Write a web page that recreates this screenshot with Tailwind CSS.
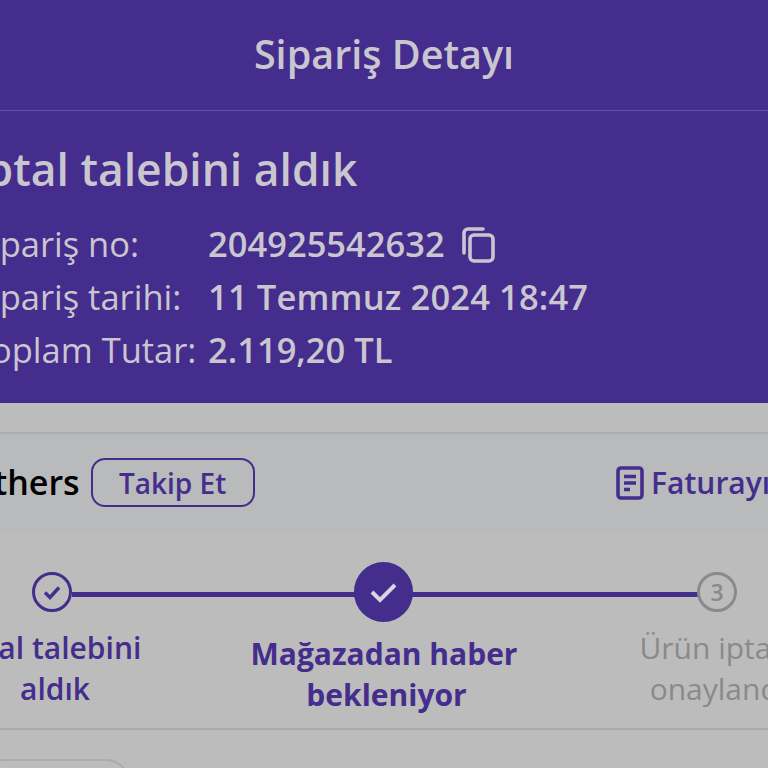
<!DOCTYPE html>
<html lang="tr"><head><meta charset="utf-8"><script src="https://cdn.jsdelivr.net/npm/@tailwindcss/browser@4"></script></head>
<body class="m-0">
<div class="w-[768px] h-[768px] overflow-hidden bg-[#bcbcbc] font-['Open_Sans','Noto_Sans',sans-serif]">
  <section class="h-[403px] bg-[#442d8c] text-[#cac6d0]">
    <header class="h-[111px] border-b border-[#6553a0] flex items-center justify-center text-[39.5px] font-semibold">Sipariş Detayı</header>
    <div class="-ml-[28px]">
      <h1 class="mt-[30px] h-[56px] leading-[56px] text-[44.4px] font-semibold whitespace-nowrap">İptal talebini aldık</h1>
      <div class="mt-[20px] grid grid-cols-[236px_auto] justify-start text-[34.5px] leading-[53px] whitespace-nowrap">
        <span>Sipariş no:</span>
        <span class="flex items-center font-semibold">204925542632
          <svg class="ml-[16px] mt-[3px]" width="36" height="36" viewBox="0 0 36 36" fill="none" stroke="#cac6d0" stroke-width="3.6" stroke-linecap="round" stroke-linejoin="round"><rect x="9" y="8" width="23" height="26" rx="4"/><path d="M3 26V6a4 4 0 0 1 4-4h15"/></svg>
        </span>
        <span>Sipariş tarihi:</span>
        <span class="font-semibold tracking-[0.15px]">11 Temmuz 2024 18:47</span>
        <span>Toplam Tutar:</span>
        <span class="font-semibold">2.119,20 TL</span>
      </div>
    </div>
  </section>
  <div class="h-[31px] border-b-2 border-[#acacac]"></div>
  <div class="h-[99px] pb-[2px] bg-[#b9babc] flex items-center justify-between">
    <div class="flex items-center -ml-[33px]">
      <span class="text-[34px] font-semibold text-black whitespace-nowrap">Others</span>
      <span class="ml-[11px] w-[164px] h-[49px] rounded-[14px] border-2 border-[#442d8c] flex items-center justify-center text-[28px] font-semibold text-[#442d8c]">Takip Et</span>
    </div>
    <div class="flex items-center -mr-[63px] text-[#442d8c] whitespace-nowrap">
      <svg width="28" height="34" viewBox="0 0 28 34" fill="none" stroke="#442d8c" stroke-width="3.6"><rect x="2" y="2" width="24" height="30" rx="3"/><path d="M8 10.5h12M8 17h12M8 23.5h6"/></svg>
      <span class="ml-[7px] text-[30px] font-semibold">Faturayı Gör</span>
    </div>
  </div>
  <div class="relative h-[197px] border-b-2 border-[#acacac] grid grid-cols-[332px_332px_332px] -ml-[114px] w-[1000px]">
    <div class="absolute left-[186px] w-[626px] top-[59px] h-[5px] bg-[#442d8c]"></div>
    <div class="relative flex flex-col items-center text-center">
      <span class="mt-[39px] w-[40px] h-[40px] rounded-full border-[3px] border-[#442d8c] bg-[#bcbcbc] flex items-center justify-center"><svg width="22" height="22" viewBox="0 0 22 22" fill="none" stroke="#442d8c" stroke-width="3.4"><path d="M4 11.5l5 5 9-10"/></svg></span>
      <span class="mt-[15px] pl-[6px] text-[30px] leading-[41px] font-semibold text-[#442d8c]"><span class="pr-[10px]">İptal talebini</span><br>aldık</span>
    </div>
    <div class="relative flex flex-col items-center text-center">
      <span class="mt-[29px] -ml-[1px] w-[59px] h-[60px] rounded-full bg-[#442d8c] flex items-center justify-center"><svg width="32" height="32" viewBox="0 0 32 32" fill="none" stroke="#d8d5e0" stroke-width="4"><path d="M4 16l8 8 15-15"/></svg></span>
      <span class="mt-[11px] text-[30px] leading-[41px] font-bold text-[#442d8c] whitespace-nowrap">Mağazadan haber<br><span class="pl-[5px]">bekleniyor</span></span>
    </div>
    <div class="relative flex flex-col items-center text-center">
      <span class="mt-[39px] ml-[2px] w-[40px] h-[40px] rounded-full border-[3px] border-[#8a8a8a] bg-[#bcbcbc] flex items-center justify-center text-[23px] font-semibold text-[#8a8a8a]">3</span>
      <span class="mt-[15px] text-[30px] leading-[41px] text-[#8a8a8a] whitespace-nowrap"><span class="pr-[6px]">Ürün iptali</span><br><span class="pl-[4px]">onaylandı</span></span>
    </div>
  </div>
  <div class="mt-[29px] -ml-[20px] w-[150px] h-[40px] rounded-t-[24px] border-2 border-[#acacac]"></div>
</div>
</body></html>
